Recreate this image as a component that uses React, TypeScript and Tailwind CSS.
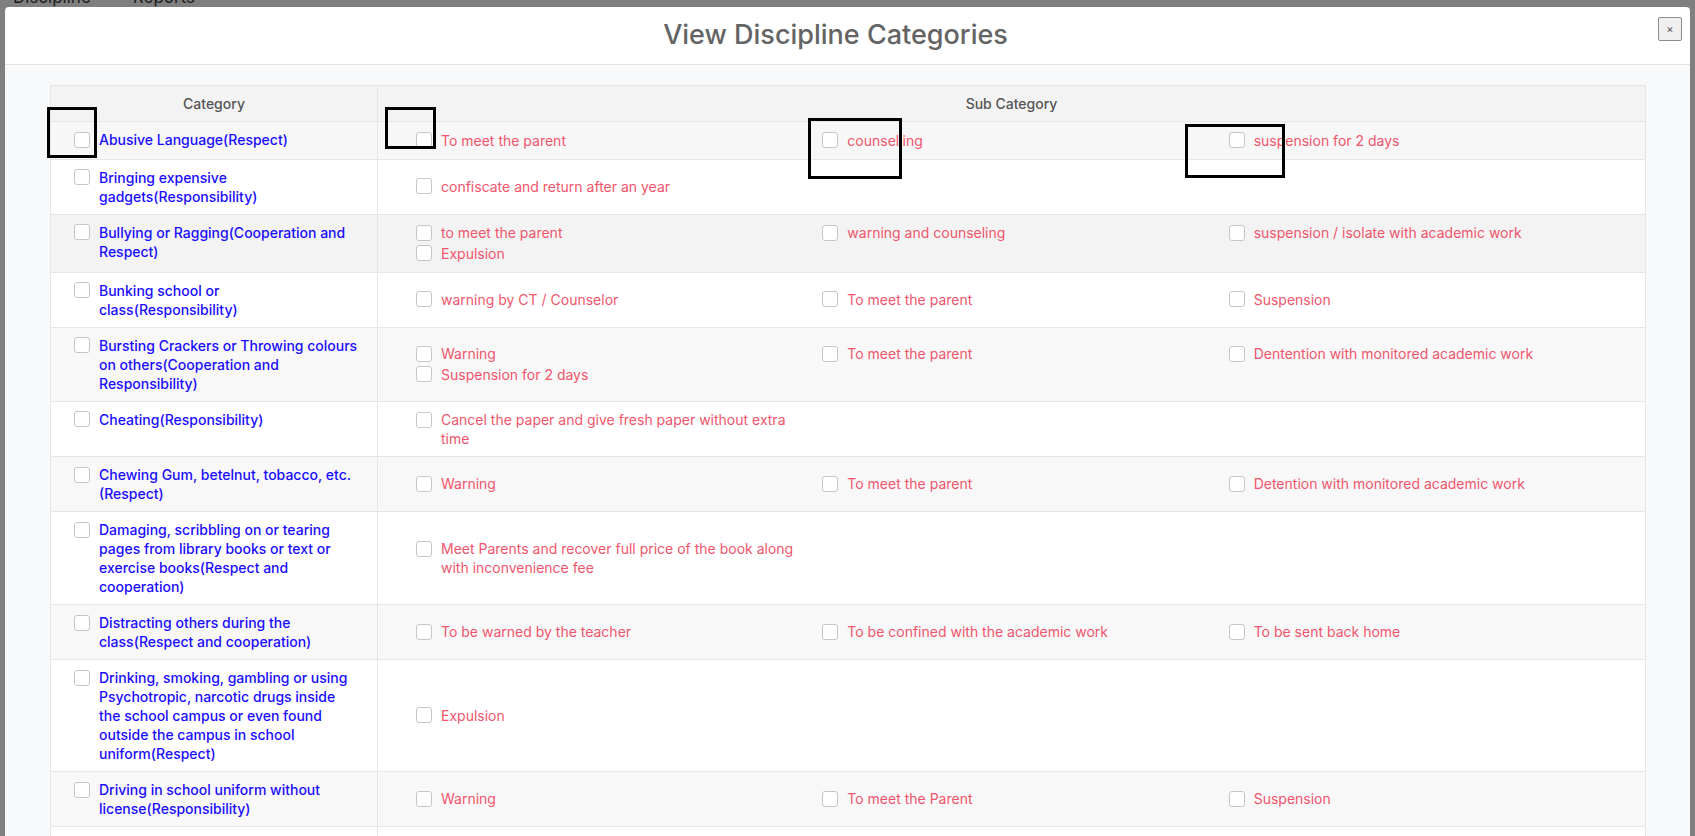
import React from "react";

type Row = {
  lines: string[];
  subs: string[][][]; // columns -> items -> lines
  bg: string;
};

const rows: Row[] = [
  {
    lines: ["Abusive Language(Respect)"],
    subs: [[["To meet the parent"]], [["counselling"]], [["suspension for 2 days"]]],
    bg: "bg-[#f7f7f7]",
  },
  {
    lines: ["Bringing expensive", "gadgets(Responsibility)"],
    subs: [[["confiscate and return after an year"]]],
    bg: "bg-white",
  },
  {
    lines: ["Bullying or Ragging(Cooperation and", "Respect)"],
    subs: [
      [["to meet the parent"], ["Expulsion"]],
      [["warning and counseling"]],
      [["suspension / isolate with academic work"]],
    ],
    bg: "bg-[#f3f3f3]",
  },
  {
    lines: ["Bunking school or", "class(Responsibility)"],
    subs: [[["warning by CT / Counselor"]], [["To meet the parent"]], [["Suspension"]]],
    bg: "bg-white",
  },
  {
    lines: ["Bursting Crackers or Throwing colours", "on others(Cooperation and", "Responsibility)"],
    subs: [
      [["Warning"], ["Suspension for 2 days"]],
      [["To meet the parent"]],
      [["Dentention with monitored academic work"]],
    ],
    bg: "bg-[#f8f8f8]",
  },
  {
    lines: ["Cheating(Responsibility)"],
    subs: [[["Cancel the paper and give fresh paper without extra", "time"]]],
    bg: "bg-white",
  },
  {
    lines: ["Chewing Gum, betelnut, tobacco, etc.", "(Respect)"],
    subs: [[["Warning"]], [["To meet the parent"]], [["Detention with monitored academic work"]]],
    bg: "bg-[#f8f8f8]",
  },
  {
    lines: [
      "Damaging, scribbling on or tearing",
      "pages from library books or text or",
      "exercise books(Respect and",
      "cooperation)",
    ],
    subs: [[["Meet Parents and recover full price of the book along", "with inconvenience fee"]]],
    bg: "bg-white",
  },
  {
    lines: ["Distracting others during the", "class(Respect and cooperation)"],
    subs: [
      [["To be warned by the teacher"]],
      [["To be confined with the academic work"]],
      [["To be sent back home"]],
    ],
    bg: "bg-[#f8f8f8]",
  },
  {
    lines: [
      "Drinking, smoking, gambling or using",
      "Psychotropic, narcotic drugs inside",
      "the school campus or even found",
      "outside the campus in school",
      "uniform(Respect)",
    ],
    subs: [[["Expulsion"]]],
    bg: "bg-white",
  },
  {
    lines: ["Driving in school uniform without", "license(Responsibility)"],
    subs: [[["Warning"]], [["To meet the Parent"]], [["Suspension"]]],
    bg: "bg-[#f8f8f8]",
  },
  {
    lines: ["Eve teasing(Respect)"],
    subs: [[["To meet the parent"]], [["Warning"]], [["Suspension"]]],
    bg: "bg-white",
  },
];

function Box() {
  return <span className="block h-[16px] w-[16px] shrink-0 rounded-[3px] border border-[#c6c6c6] bg-white" />;
}

export default function App() {
  return (
    <div
      className="relative h-[836px] w-[1695px] overflow-hidden bg-[#7f7f7f]"
      style={{ fontFamily: "Inter, 'Open Sans', sans-serif" }}
    >
      {/* page behind the overlay */}
      <div className="flex h-[7px] gap-[42px] overflow-hidden pl-[13px] text-[17px] leading-none text-[#1c1c1c]">
        <span className="-mt-[11px]">Discipline</span>
        <span className="-mt-[11px]">Reports</span>
      </div>

      {/* modal */}
      <div className="ml-[5px] w-[1685px] rounded-t-[4px] bg-white">
        <div className="flex h-[58px] items-center border-b border-[#e2e2e2] pl-[8px] pr-[8px]">
          <h4 className="flex-1 text-center text-[27px] font-medium text-[#646464]">View Discipline Categories</h4>
          <button className="mt-[10px] flex h-[24px] w-[24px] self-start items-center justify-center rounded-[2px] border border-[#8c8c8c] bg-[#efefef] text-[11px] leading-none text-[#555]">
            ×
          </button>
        </div>

        <div className="bg-[#f8f9fa] px-[45px] pt-[20px] pb-[40px]">
          <table className="w-[1596px] table-fixed border-collapse border border-[#e6e6e6] text-[14px]">
            <colgroup>
              <col className="w-[327px]" />
              <col />
            </colgroup>
            <thead>
              <tr className="bg-[#f3f3f3]">
                <th className="border border-[#e6e6e6] py-[8px] text-center font-medium leading-[19px] text-[#555]">Category</th>
                <th className="border border-[#e6e6e6] py-[8px] text-center font-medium leading-[19px] text-[#555]">Sub Category</th>
              </tr>
            </thead>
            <tbody>
              {rows.map((row, i) => (
                <tr key={i} className={row.bg}>
                  <td className="border border-[#e6e6e6] py-[8px] pr-[12px] pl-[23px] align-top">
                    <div className="flex gap-[9px]">
                      <div className="mt-[1.5px]">
                        <Box />
                      </div>
                      <div className="font-medium whitespace-nowrap leading-[19px] text-[#1a0dff]">
                        {row.lines.map((l, j) => (
                          <div key={j}>{l}</div>
                        ))}
                      </div>
                    </div>
                  </td>
                  <td className="border border-[#e6e6e6] py-[8px] pr-[10px] pl-[38px] align-middle">
                    <div className="grid grid-cols-3">
                      {row.subs.map((col, c) => (
                        <div key={c}>
                          {col.map((item, k) => (
                            <div key={k} className="flex min-h-[20.5px] gap-[9px]">
                              <div className="mt-[2px]">
                                <Box />
                              </div>
                              <div className="whitespace-nowrap pt-[0.5px] leading-[19px] text-[#f1556c]">
                                {item.map((l, j) => (
                                  <div key={j}>{l}</div>
                                ))}
                              </div>
                            </div>
                          ))}
                        </div>
                      ))}
                    </div>
                  </td>
                </tr>
              ))}
            </tbody>
          </table>
        </div>
      </div>

      {/* annotation marks */}
      <div className="absolute left-[47px] top-[107px] h-[51px] w-[50px] border-[3px] border-black" />
      <div className="absolute left-[385px] top-[107px] h-[42px] w-[51px] border-[3px] border-black" />
      <div className="absolute left-[808px] top-[118px] h-[61px] w-[94px] border-[3px] border-black" />
      <div className="absolute left-[1185px] top-[124px] h-[54px] w-[100px] border-[3px] border-black" />
    </div>
  );
}
